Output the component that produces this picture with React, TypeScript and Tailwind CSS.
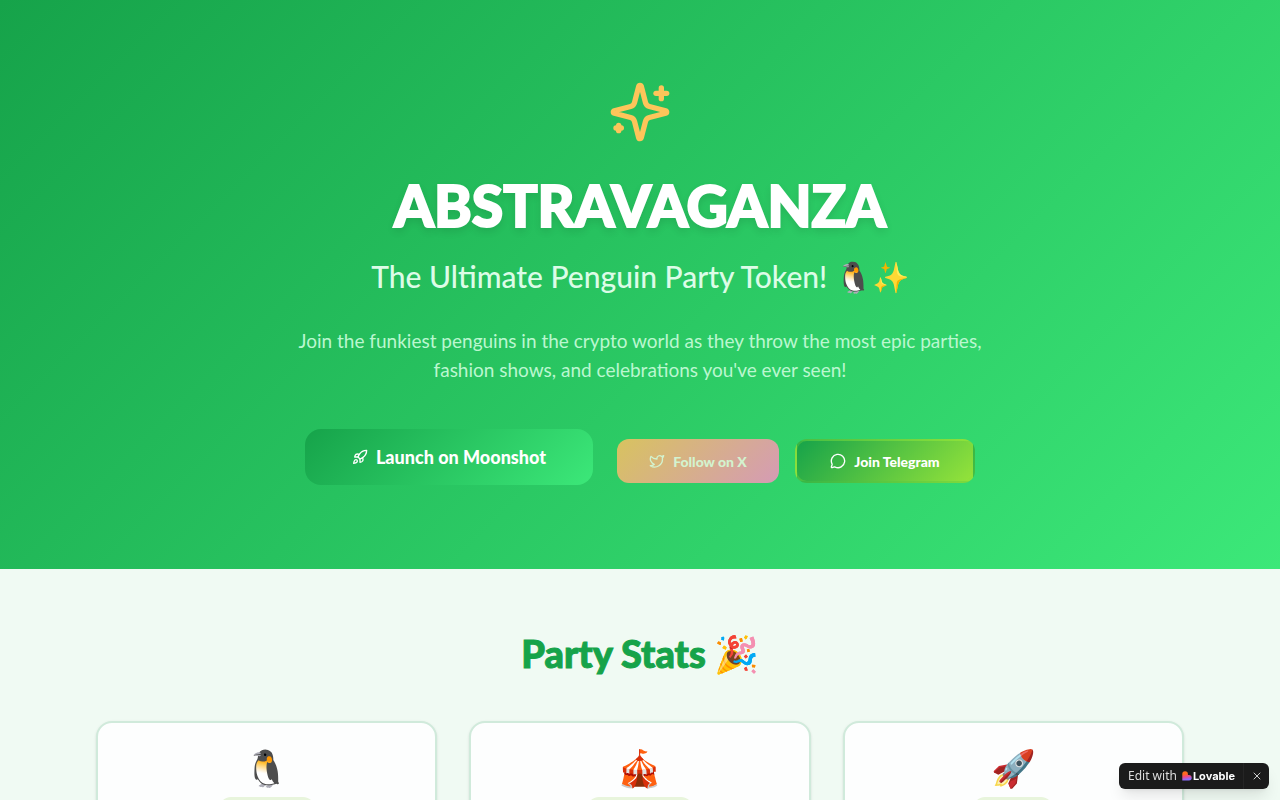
import React from 'react';
import { Rocket, Twitter, MessageCircle, X } from 'lucide-react';

const STATS = [
  { emoji: '🐧', badge: 'w-24' },
  { emoji: '🎪', badge: 'w-[106px]' },
  { emoji: '🚀', badge: 'w-20' },
];

const SparklesIcon: React.FC = () => (
  <svg
    className="w-16 h-16 text-[#fdc55a]"
    viewBox="0 0 24 24"
    fill="none"
    stroke="currentColor"
    strokeWidth="2"
    strokeLinecap="round"
    strokeLinejoin="round"
  >
    <path d="M9.937 15.5A2 2 0 0 0 8.5 14.063l-6.135-1.582a.5.5 0 0 1 0-.962L8.5 9.936A2 2 0 0 0 9.937 8.5l1.582-6.135a.5.5 0 0 1 .963 0L14.063 8.5A2 2 0 0 0 15.5 9.937l6.135 1.581a.5.5 0 0 1 0 .964L15.5 14.063a2 2 0 0 0-1.437 1.437l-1.582 6.135a.5.5 0 0 1-.963 0z" />
    <path d="M20 3v4" />
    <path d="M22 5h-4" />
    <path d="M4 17v2" />
    <path d="M5 18H3" />
  </svg>
);

const Hero: React.FC = () => (
  <section className="bg-[linear-gradient(135deg,#16a34a_0%,#3ce879_100%)] px-4 pt-20 pb-[76px] flex flex-col items-center text-center">
    <SparklesIcon />
    <h1 className="mt-8 text-[57px] leading-[58px] font-black text-white [-webkit-text-stroke:2px_white] text-shadow-[0_4px_8px_rgba(0,0,0,0.12)]">
      ABSTRAVAGANZA
    </h1>
    <p className="mt-6 text-[30px] leading-9 font-medium text-[#dcfce7]">
      The Ultimate Penguin Party Token! 🐧✨
    </p>
    <p className="mt-8 max-w-[700px] text-[19px] leading-[29px] text-[#bbf7d0]">
      Join the funkiest penguins in the crypto world as they throw the most epic parties, fashion
      shows, and celebrations you've ever seen!
    </p>

    {/* Call to action */}
    <div className="mt-[45px] flex flex-wrap items-center justify-center gap-4">
      <button className="mb-2 mr-2 w-72 h-14 rounded-2xl bg-[linear-gradient(135deg,#16a34a,#3ce879)] flex items-center justify-center gap-2 text-[18px] font-black text-white">
        <Rocket size={16} /> Launch on Moonshot
      </button>
      <button className="w-[162px] h-11 rounded-xl bg-[linear-gradient(135deg,#d8c35f,#d59bb5)] flex items-center justify-center gap-2 text-[14px] font-black text-[#d3f3cf]">
        <Twitter size={16} /> Follow on X
      </button>
      <button className="w-[180px] h-11 rounded-xl border-2 border-[#84e03a]/30 bg-[linear-gradient(135deg,#16a34a,#95e33a)] flex items-center justify-center gap-2 text-[14px] font-black text-white">
        <MessageCircle size={16} /> Join Telegram
      </button>
    </div>
  </section>
);

const Stats: React.FC = () => (
  <section className="px-16 py-16">
    <h2 className="flex items-center justify-center gap-2 text-[38px] leading-10 font-black text-[#16a34a] [-webkit-text-stroke:1px_#16a34a]">
      Party Stats <span className="text-[36px]">🎉</span>
    </h2>
    <div className="mx-auto mt-12 max-w-6xl px-8 grid grid-cols-3 gap-8">
      {STATS.map(stat => (
        <div
          key={stat.emoji}
          className="rounded-2xl border-2 border-[#d0eadb] bg-[#fdfefe] p-6 flex flex-col items-center shadow-sm"
        >
          <span className="text-[36px] leading-10">{stat.emoji}</span>
          <div className={`mt-[10px] h-6 rounded-full bg-[#e8f5dc] ${stat.badge}`}></div>
        </div>
      ))}
    </div>
  </section>
);

const LovableBadge: React.FC = () => (
  <div className="fixed right-[11px] bottom-[11px] h-[26px] rounded-md bg-[#1b1b1b] pl-[9px] flex items-center text-white shadow-lg font-['Inter',sans-serif]">
    <a href="#" className="flex items-center">
      <span className="text-[12px] font-['Noto_Sans',sans-serif] text-[#dddddd]">Edit with</span>
      <svg className="ml-[5px] w-[10px] h-[10px]" viewBox="0 0 10 10">
        <defs>
          <linearGradient id="heart" x1="0.3" y1="0" x2="0.5" y2="1">
            <stop offset="0.3" stopColor="#ff6a1f" />
            <stop offset="0.55" stopColor="#f5477a" />
            <stop offset="0.9" stopColor="#8b6cff" />
          </linearGradient>
        </defs>
        <path
          fill="url(#heart)"
          d="M0.3 9.4V3a2.8 2.8 0 0 1 5.6 0v1.1h1.1A2.7 2.7 0 0 1 9.7 6.7 2.7 2.7 0 0 1 7 9.4Z"
        />
      </svg>
      <span className="ml-[1px] text-[11px] font-bold">Lovable</span>
    </a>
    <button aria-label="Close" className="ml-2 h-full w-[26px] border-l border-[#252525] flex items-center justify-center text-[#cccccc]">
      <X size={12} />
    </button>
  </div>
);

const App: React.FC = () => {
  return (
    <div className="min-h-screen bg-[#f0faf3] font-['Lato',sans-serif]">
      <Hero />
      <Stats />
      <LovableBadge />
    </div>
  );
};

export default App;
